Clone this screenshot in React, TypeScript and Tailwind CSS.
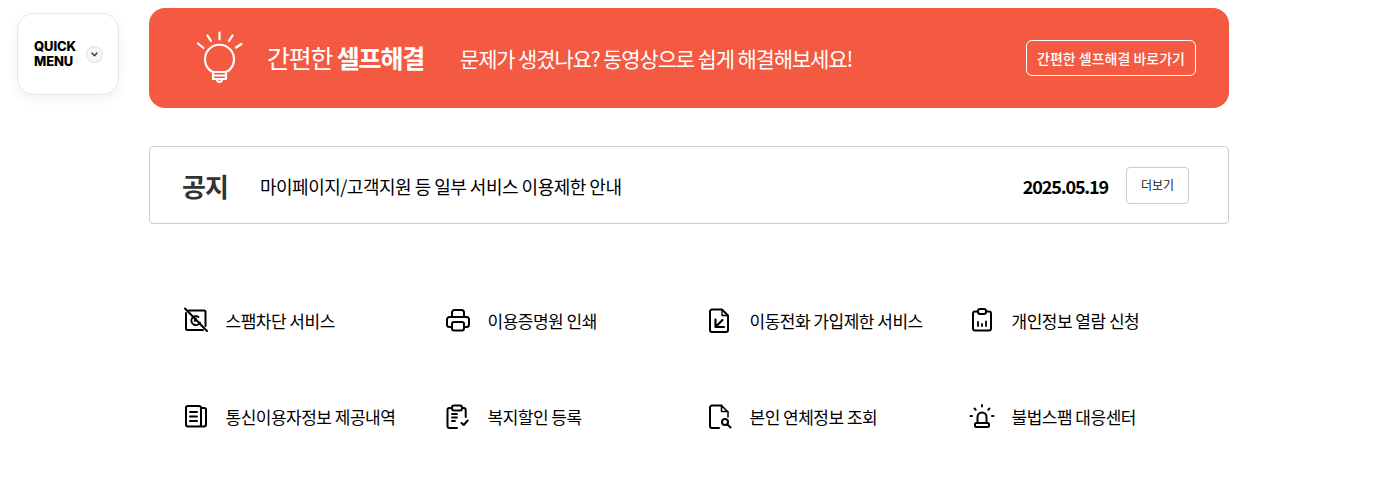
const font = { fontFamily: '"Noto Sans CJK KR", "Noto Sans", sans-serif' };

const S = { fill: 'none', stroke: '#000', strokeWidth: 2, strokeLinecap: 'round', strokeLinejoin: 'round' } as const;

function Ic({ children }: { children: React.ReactNode }) {
  return (
    <svg width="26" height="26" viewBox="0 0 26 26" className="shrink-0" {...S}>
      {children}
    </svg>
  );
}

const items: [React.ReactNode, string][] = [
  [
    <>
      <path d="M6 3.500h15a1.500 1.500 0 0 1 1.500 1.500V19M20 23H4.500A1.500 1.500 0 0 1 3 21.500V6" />
      <path d="M2 1.500 24 24" />
      <path d="M15.500 10a4.500 4.500 0 1 0 1.500 5.500" strokeWidth="1.800" />
      <path d="M13 11.500a1.800 1.800 0 0 0-1 2.500" strokeWidth="1.800" />
    </>,
    '스팸차단 서비스',
  ],
  [
    <>
      <path d="M7 10V5.500A2.500 2.500 0 0 1 9.500 3h7A2.500 2.500 0 0 1 19 5.500V10" />
      <path d="M7 20H4.500A2.500 2.500 0 0 1 2 17.500v-5A2.500 2.500 0 0 1 4.500 10h17a2.500 2.500 0 0 1 2.500 2.500v5a2.500 2.500 0 0 1-2.500 2.500H19" />
      <rect x="7" y="15" width="12" height="8.500" rx="2" />
    </>,
    '이용증명원 인쇄',
  ],
  [
    <>
      <path d="M15 2.500H5a2 2 0 0 0-2 2v18.500a2 2 0 0 0 2 2h14a2 2 0 0 0 2-2V8.500z" />
      <path d="M15 3v5.500h5.500" strokeWidth="1.400" />
      <path d="M8.500 12.500V20H17M15.500 13 9 19.500" strokeWidth="2.200" />
    </>,
    '이동전화 가입제한 서비스',
  ],
  [
    <>
      <path d="M9 4.500H6a2 2 0 0 0-2 2v15a2 2 0 0 0 2 2h14a2 2 0 0 0 2-2v-15a2 2 0 0 0-2-2h-3" />
      <rect x="9" y="2" width="8" height="5" rx="2" />
      <path d="M9 15v4M13 17v2M17 14.500V19" strokeWidth="1.800" />
    </>,
    '개인정보 열람 신청',
  ],
  [
    <>
      <rect x="3" y="3" width="15" height="20.500" rx="2" />
      <path d="M18 5h3.500A1.500 1.500 0 0 1 23 6.500v15a2 2 0 0 1-2 2h-3" />
      <path d="M7 9h7M7 13.500h7M7 18h7" />
    </>,
    '통신이용자정보 제공내역',
  ],
  [
    <>
      <path d="M7 5H4.500a2 2 0 0 0-2 2v16a2 2 0 0 0 2 2H12" />
      <path d="M17 5h1.700a2 2 0 0 1 2 2v7" />
      <rect x="7" y="2.500" width="10" height="5" rx="2" />
      <path d="M7 11h5M7 14.500h5M7 18h3" strokeWidth="1.800" />
      <path d="m16.500 20 2.200 2 4-4.500" />
    </>,
    '복지할인 등록',
  ],
  [
    <>
      <path d="M14.500 2.500H5a2 2 0 0 0-2 2v18.500a2 2 0 0 0 2 2h7" />
      <path d="M14.500 2.500V8.500H21M14.500 2.500 21 9v5" strokeWidth="1.500" />
      <circle cx="18" cy="19" r="3" />
      <path d="m20.500 21.500 3 3" />
    </>,
    '본인 연체정보 조회',
  ],
  [
    <>
      <path d="M8.500 20v-6a4.500 4.500 0 0 1 9 0v6" />
      <rect x="6" y="20" width="14" height="4" rx="1.200" />
      <path d="M13 2v1.500M5.500 5.500l1.200 1.200M20.500 5.500l-1.200 1.200M1.500 13H3M23 13h1.500" />
    </>,
    '불법스팸 대응센터',
  ],
];

export default function App() {
  return (
    <div className="flex w-[1380px] h-[498px] bg-white overflow-hidden text-black" style={font}>
      <aside className="w-[149px] shrink-0 pl-[17px] pt-[13px]">
        <div className="w-[102px] h-[82px] rounded-[17px] border border-[#e8e8e8] bg-white shadow-[0_4px_12px_rgba(0,0,0,0.06)] flex items-center pl-[16px] gap-[10px]">
          <div className="text-[13px] leading-[15px] font-bold text-black tracking-[-0.1px]" style={{ fontFamily: 'Inter, sans-serif', fontWeight: 800 }}>
            QUICK
            <br />
            MENU
          </div>
          <div className="w-[17px] h-[17px] rounded-full bg-[#f7f7f7] border border-[#dddddd] flex items-center justify-center">
            <svg width="9" height="9" viewBox="0 0 9 9" fill="none" stroke="#444" strokeWidth="1.500" strokeLinecap="round" strokeLinejoin="round">
              <path d="m2 3 2.500 2.800L7 3" />
            </svg>
          </div>
        </div>
      </aside>
      <main className="w-[1080px] shrink-0 pt-2">
        <section className="h-[100px] rounded-[16px] bg-[#f35a41] flex items-center text-white pl-[46px] pr-[33px]">
          <svg width="50" height="54" viewBox="0 0 50 54" fill="none" stroke="#fff" strokeWidth="2.200" strokeLinecap="round" strokeLinejoin="round" className="shrink-0">
            <path d="M24.500 1.500v7M12.500 4.500l3.500 5.500M37.500 4.500l-3.500 5.500M3 12.500l5.500 4.500M46.500 13l-5.500 3.500" />
            <path d="M18.500 41 16 40A14.500 14.500 0 1 1 33 40l-2.500 1z" />
            <path d="M18 41v7h13v-7M18 44.500h13" />
            <path d="M22 48c0 2 1.200 3 2.500 3s2.500-1 2.500-3" />
          </svg>
          <div className="ml-[22px] text-[25px] tracking-[-1.2px] font-normal whitespace-nowrap">
            간편한 <span className="font-bold">셀프해결</span>
          </div>
          <div className="ml-[36px] text-[21px] tracking-[-1.150px] font-normal whitespace-nowrap pt-[2px]">문제가 생겼나요? 동영상으로 쉽게 해결해보세요!</div>
          <a className="ml-auto w-[170px] h-[36px] rounded-[6px] border border-white flex items-center justify-center text-[14px] font-medium whitespace-nowrap">
            간편한 셀프해결 바로가기
          </a>
        </section>
        <section className="mt-[38px] h-[78px] rounded-[4px] border border-[#cccccc] flex items-center pl-[32px] pr-[39px]">
          <h2 className="text-[26px] font-bold text-[#333333] tracking-[-0.8px] w-[78px]">공지</h2>
          <p className="text-[18px] tracking-[-0.5px] text-black pt-[2px]">마이페이지/고객지원 등 일부 서비스 이용제한 안내</p>
          <span className="ml-auto text-[18px] font-semibold tracking-[-1.150px] text-black pt-[2px]">2025.05.19</span>
          <a className="ml-[18px] w-[63px] h-[37px] rounded-[4px] border border-[#cccccc] flex items-center justify-center text-[12px] text-[#222222]">더보기</a>
        </section>
        <section className="mt-[48px] pl-[34px] grid grid-cols-[262px_262px_262px_262px] auto-rows-[96px]">
          {items.map(([icon, label]) => (
            <div key={label} className="flex items-center gap-[16.5px] h-[96px]">
              <Ic>{icon}</Ic>
              <span className="pt-[2px] text-[17px] tracking-[-0.5px] whitespace-nowrap text-black">{label}</span>
            </div>
          ))}
        </section>
      </main>
    </div>
  );
}
